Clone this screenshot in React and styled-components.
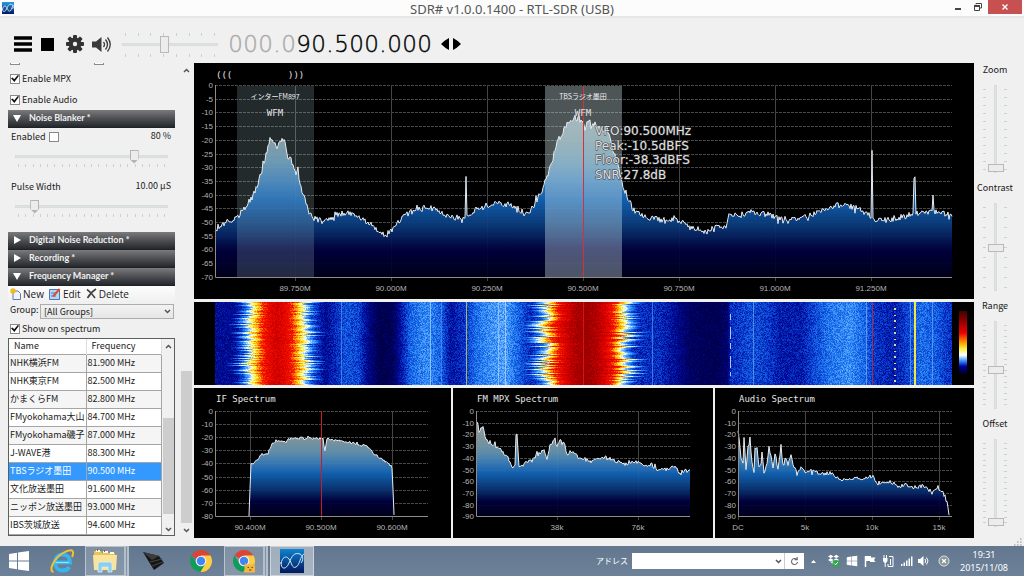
import { useMemo } from "react"
import { styled, createGlobalStyle, css } from "styled-components"
import { FaDropbox, FaWindows } from "react-icons/fa"

const GlobalStyle = createGlobalStyle`
  * { box-sizing: border-box; }

  body {
    margin: 0;
    background: #f0f0f0;
    color: #1a1a1a;
    font: 9px/12px "Noto Sans CJK JP", "Liberation Sans", sans-serif;
  }

  button, input, select {
    font: inherit;
    color: inherit;
    margin: 0;
    padding: 0;
    border: 0;
    background: none;
  }

  svg { display: block; }
`

/* ---------- window frame ---------- */

const Window = styled.div`
  display: flex;
  flex-direction: column;
`

const TitleBar = styled.header`
  display: grid;
  grid-template-columns: 80px 1fr 80px;
  height: 18px;
  background: #fcfcfc;
  border-bottom: 2px solid #e7e7e7;
`

const AppIcon = styled.div`
  padding: 2px;
`

const Title = styled.h1`
  margin: 0;
  color: #555;
  text-align: center;
  font: 400 13px/18px "Noto Sans", sans-serif;
`

const WindowButtons = styled.div`
  display: flex;
  justify-content: flex-end;
  padding-right: 2px;
`

const WindowButton = styled.button`
  display: grid;
  place-items: center;
  width: ${({ $close }) => ($close ? 34 : 20)}px;
  height: 14px;
  background: ${({ $close }) => ($close ? "#c75050" : "none")};
`

const TopBar = styled.div`
  display: flex;
  align-items: center;
  height: 45px;
  padding: 7px 12px 0;
`

const ToolButton = styled.button`
  display: grid;
  place-items: center;
  width: 27px;
  height: 20px;

  &:first-child {
    width: 22px;
  }
`

const Frequency = styled.output`
  display: flex;
  margin: 0 9px 0 10px;
  color: #000;
  font: 200 23px/26px "DejaVu Sans Light", "DejaVu Sans", sans-serif;
  -webkit-text-stroke: 0.4px;
`

const Digit = styled.span`
  width: ${({ $dot }) => ($dot ? 8 : 15)}px;
  text-align: center;
  color: ${({ $dim }) => ($dim ? "#aaa" : "#000")};
`

const Main = styled.main`
  display: grid;
  grid-template-columns: 194px 1fr 50px;
`

/* ---------- sliders ---------- */

const thumb = css`
  -webkit-appearance: none;
  border: 1px solid #b9b9b9;
  background: #ececec;
`

const Range = styled.input`
  -webkit-appearance: none;
  appearance: none;
  display: block;
  width: 100%;
  height: ${({ $pointed }) => ($pointed ? 14 : 17)}px;

  &::-webkit-slider-runnable-track {
    height: 3px;
    background: #e0e3e3;
    border: 1px solid #d9dcdc;
  }

  &::-webkit-slider-thumb {
    ${thumb}
    width: 9px;
    height: ${({ $pointed }) => ($pointed ? 14 : 17)}px;
    margin-top: ${({ $pointed }) => ($pointed ? -6 : -8)}px;
    ${({ $pointed }) => $pointed && css`
      border: 0;
      background: linear-gradient(#ececec, #ececec) 1px 1px / 7px 9px no-repeat, #b4b4b4;
      clip-path: polygon(0 0, 100% 0, 100% 68%, 50% 100%, 0 68%);
    `}
  }
`

const VerticalRange = styled.input`
  -webkit-appearance: none;
  appearance: none;
  writing-mode: vertical-lr;
  direction: rtl;
  width: 16px;
  height: 88px;

  &::-webkit-slider-runnable-track {
    width: 3px;
    background: #e0e3e3;
    border: 1px solid #d9dcdc;
  }

  &::-webkit-slider-thumb {
    ${thumb}
    width: 16px;
    height: 8px;
    margin-left: -7px;
  }
`

const TickLine = styled.div`
  display: flex;
  flex-direction: ${({ $vertical }) => ($vertical ? "column" : "row")};
  justify-content: space-between;
  ${({ $vertical }) => ($vertical ? "height: 81px;" : "margin: 1px 3px 0;")}

  span {
    width: ${({ $vertical }) => ($vertical ? 3 : 1)}px;
    height: ${({ $vertical }) => ($vertical ? 1 : 3)}px;
    background: #cfcfcf;
  }
`

const Ticks = ({ count, vertical }) => (
  <TickLine $vertical={vertical}>
    {Array.from({ length: count }, (_, i) => <span key={i} />)}
  </TickLine>
)

const VolumeSlider = styled.div`
  width: 96px;
  margin-left: 7px;
`

const SliderColumn = styled.aside`
  padding-right: 8px;
`

const SliderGroup = styled.label`
  display: flex;
  flex-direction: column;
  align-items: center;
  gap: 9px;
  height: 118px;
  line-height: 13px;
`

const SliderScale = styled.span`
  display: flex;
  align-items: center;
  gap: 1px;
`

/* ---------- side panel ---------- */

const Sidebar = styled.aside`
  display: grid;
  grid-template-columns: 1fr 12px;
  gap: 5px;
  padding: 0 2px 2px 8px;
`

const Panels = styled.div`
  display: flex;
  flex-direction: column;
`

const CutRow = styled.div`
  display: flex;
  align-items: flex-end;
  gap: 74px;
  height: 2px;
  padding-left: 2px;
  overflow: hidden;
`

const CheckRow = styled.label`
  display: flex;
  align-items: center;
  gap: 2px;
  height: ${({ $height }) => $height || 21}px;
  padding-left: 2px;
`

const Check = styled.input`
  -webkit-appearance: none;
  appearance: none;
  display: grid;
  place-content: center;
  flex: none;
  width: 10px;
  height: 10px;
  background: #fff;
  border: 1px solid #8a8a8a;

  &:checked::before {
    content: "";
    width: 8px;
    height: 7px;
    background: #111;
    clip-path: polygon(0 45%, 20% 35%, 40% 62%, 85% 0, 100% 12%, 42% 100%);
  }
`

const CheckGroup = styled.div`
  padding-top: 3px;
`

const PanelHeader = styled.button`
  display: flex;
  align-items: center;
  gap: 8px;
  height: 18px;
  padding: 0 5px 2px;
  color: #f0f0f0;
  text-align: left;
  font: 700 9px/12px Lato, sans-serif;
  background: linear-gradient(#7b7b7d 0%, #515357 45%, #24282c 100%);
  border-bottom: 1px solid #1e2225;
`

const PanelBody = styled.div`
  display: flex;
  flex-direction: column;
  gap: 11px;
  padding-bottom: 15px;
`

const Setting = styled.div`
  padding: 0 7px;
`

const SettingRow = styled.div`
  display: flex;
  justify-content: space-between;
  height: 17px;
  margin: 0 -3px 4px -4px;
  line-height: 15px;

  label {
    display: flex;
    align-items: center;
    gap: 3px;
  }
`

const ActionBar = styled.div`
  display: flex;
  gap: 5px;
  height: 15px;
  margin-bottom: 3px;
  padding-left: 2px;
  background: linear-gradient(#fdfdfd, #f1f1f1);
`

const Action = styled.button`
  display: flex;
  align-items: center;
  gap: 2px;
  font: 10px/14px "Open Sans", sans-serif;
`

const GroupRow = styled.div`
  display: grid;
  grid-template-columns: 30px 1fr;
  height: 15px;
  padding: 0 1px 0 2px;
  line-height: 11px;
`

const SelectBox = styled.span`
  display: grid;
  align-items: center;

  select, svg {
    grid-area: 1 / 1;
  }

  svg {
    justify-self: end;
    margin-right: 3px;
    pointer-events: none;
  }
`

const Select = styled.select`
  -webkit-appearance: none;
  appearance: none;
  height: 15px;
  padding: 0 3px;
  line-height: 13px;
  background: linear-gradient(#f2f2f2, #e6e6e6);
  border: 1px solid #adadad;
`

const TableBox = styled.div`
  display: grid;
  grid-template-columns: 1fr 12px;
  height: 198px;
  overflow: hidden;
  background: #fff;
  border: 1px solid #5c605c;
`

const Table = styled.table`
  width: 100%;
  border-collapse: collapse;
  table-layout: fixed;

  th {
    height: 15px;
    padding: 0 5px;
    font-weight: 400;
    text-align: left;
    border-right: 1px solid #ddd;
  }

  th:first-child {
    width: 77px;
  }
`

const TableRow = styled.tr`
  color: ${({ $selected }) => ($selected ? "#fff" : "inherit")};
  background: ${({ $selected }) => ($selected ? "#3399ff" : "#fff")};

  &:nth-child(odd) {
    background: ${({ $selected }) => ($selected ? "#3399ff" : "#f5f5f5")};
  }

  td {
    height: 18px;
    padding: 0 1px;
    white-space: nowrap;
    border: 1px solid #a5a5a5;
    border-left: 0;
  }
`

const ScrollBar = styled.div`
  display: grid;
  grid-template-rows: 14px ${({ $before }) => $before}fr ${({ $size }) => $size}fr ${({ $after }) => $after}fr 12px;
  justify-items: center;
  align-items: center;
  background: #f0f0f0;
`

const ScrollThumb = styled.div`
  grid-row: 3;
  width: 11px;
  height: 100%;
  background: #cdcdcd;
`

const ScrollEnd = styled.div`
  grid-row: 5;
`

/* ---------- spectra ---------- */

const Displays = styled.section`
  display: flex;
  flex-direction: column;
  gap: 3px;
`

const SmallCharts = styled.div`
  display: grid;
  grid-template-columns: 257fr 260fr 259fr;
  gap: 2px;
`

const Plot = styled.svg`
  width: 100%;
  height: auto;
  background: #000;

  text {
    fill: #b4b4b4;
    font: 8px "Liberation Sans", sans-serif;
  }

  .mono {
    fill: #e4e4e4;
    font: 9px "DejaVu Sans Mono", monospace;
  }

  .station {
    fill: #f0f0f0;
    font: 7px "Noto Sans CJK JP", sans-serif;
  }

  .peak {
    fill: #e0e0e0;
    stroke: #3a3a3a;
    stroke-width: 1px;
    paint-order: stroke;
    font: 12px "DejaVu Sans", sans-serif;
  }
`

const StatusStrip = styled.div`
  display: flex;
  justify-content: flex-end;
  height: 8px;
  padding-right: 2px;
`

/* ---------- taskbar ---------- */

const TaskBar = styled.footer`
  display: flex;
  align-items: center;
  height: 30px;
  color: #fff;
  background: linear-gradient(#63788f, #6d8199);
`

const TaskButton = styled.button`
  display: grid;
  place-items: center;
  width: ${({ $width }) => $width || 46}px;
  height: 30px;
  ${({ $open }) => $open && css`
    background: rgba(255, 255, 255, ${$open === "active" ? 0.4 : 0.18});
    border: 1px solid rgba(255, 255, 255, 0.45);
  `}
  ${({ $stacked }) => $stacked && css`
    border-right: 5px double rgba(255, 255, 255, 0.4);
  `}
`

const TaskButtons = styled.nav`
  display: flex;
  flex: 1;
  gap: 2px;
`

const Address = styled.label`
  display: flex;
  align-items: center;
  gap: 4px;
  margin-right: 6px;
  font-size: 8px;
`

const AddressField = styled.span`
  display: flex;
  align-items: center;
  width: 172px;
  height: 16px;
  background: #fff;

  input {
    flex: 1;
    min-width: 0;
    color: #111;
  }

  button {
    display: grid;
    place-items: center;
    width: 20px;
    height: 16px;
    border-left: 1px solid #ccc;
  }

  > svg {
    margin-right: 2px;
  }
`

const Tray = styled.div`
  display: flex;
  align-items: center;

  > svg {
    width: 18px;
  }
`

const Clock = styled.time`
  width: 60px;
  margin-right: 10px;
  text-align: center;
  font: 9px/13px "Noto Sans", sans-serif;
`

/* ---------- data ---------- */

const stations = [
  ["NHK横浜FM", "81.900 MHz"],
  ["NHK東京FM", "82.500 MHz"],
  ["かまくらFM", "82.800 MHz"],
  ["FMyokohama大山", "84.700 MHz"],
  ["FMyokohama磯子", "87.000 MHz"],
  ["J-WAVE港", "88.300 MHz"],
  ["TBSラジオ墨田", "90.500 MHz"],
  ["文化放送墨田", "91.600 MHz"],
  ["ニッポン放送墨田", "93.000 MHz"],
  ["IBS茨城放送", "94.600 MHz"],
]

const rfShape = [
  [21, 167], [26, 162], [36, 159], [43, 154], [51, 145], [59, 132], [66, 114], [71, 97], [74, 84], [76, 74],
  [79, 79], [83, 83], [87, 79], [90, 74], [93, 92], [98, 99], [102, 110], [104, 109], [107, 125], [111, 134],
  [114, 147], [120, 155], [129, 159], [134, 157], [143, 152], [148, 150], [156, 150], [169, 155], [176, 162],
  [184, 167], [191, 173], [198, 165], [209, 154], [223, 145], [236, 144], [246, 150], [259, 155], [271, 154],
  [272, 116], [273, 153], [276, 151], [286, 144], [296, 141], [313, 141], [323, 145], [333, 152], [339, 144],
  [346, 130], [353, 115], [359, 95], [363, 80], [368, 70], [374, 60], [384, 56], [389, 59], [391, 68], [393, 60],
  [399, 60], [406, 65], [414, 69], [418, 84], [423, 100], [428, 120], [434, 135], [439, 147], [449, 152],
  [458, 155], [473, 158], [486, 157], [496, 164], [506, 167], [516, 169], [523, 164], [533, 163], [535, 152],
  [546, 152], [559, 149], [576, 152], [591, 158], [609, 155], [619, 151], [633, 145], [643, 142], [663, 145],
  [676, 152], [677, 153], [678, 89], [679, 156], [693, 157], [716, 152], [719, 151], [720, 114], [721, 115],
  [722, 151], [729, 149], [738, 149], [739, 135], [740, 149], [746, 149], [758, 153],
]

const ifShape = [
  [55, 128], [56, 101], [57, 76], [63, 73], [66, 67], [74, 65], [78, 56], [83, 53], [93, 54], [94, 51],
  [106, 50], [129, 51], [131, 63], [133, 51], [146, 53], [163, 56], [173, 58], [179, 65], [193, 75],
  [198, 80], [199, 101], [200, 128],
]

const mpxShape = [
  [24, 33], [26, 43], [30, 38], [33, 53], [39, 55], [47, 61], [54, 68], [59, 80], [62, 76], [63, 45], [64, 46],
  [66, 80], [72, 75], [79, 73], [85, 66], [91, 63], [94, 70], [98, 56], [102, 51], [104, 60], [107, 51],
  [111, 55], [114, 65], [118, 63], [124, 68], [139, 74], [150, 69], [157, 71], [172, 76], [179, 73], [187, 76],
  [199, 77], [207, 83], [214, 81], [220, 78], [226, 84], [237, 82],
]

const audioShape = [
  [23, 43], [25, 58], [26, 71], [28, 75], [29, 51], [31, 81], [33, 61], [35, 51], [37, 75], [39, 86], [40, 61],
  [42, 60], [44, 78], [46, 75], [47, 64], [49, 85], [52, 75], [54, 58], [58, 81], [60, 65], [63, 81], [66, 58],
  [68, 78], [71, 71], [73, 78], [76, 65], [78, 75], [82, 86], [86, 78], [90, 85], [98, 83], [107, 86],
  [117, 85], [125, 91], [133, 91], [148, 90], [158, 88], [163, 96], [172, 93], [178, 95], [185, 100],
  [190, 95], [195, 100], [208, 98], [217, 105], [222, 99], [228, 105], [232, 115], [234, 128],
]

const randomFrom = (seed) => () => {
  seed = (seed * 1664525 + 1013904223) % 4294967296
  return seed / 4294967296
}

const lerpAt = (points, x) => {
  if (x <= points[0][0]) return points[0][1]
  for (let i = 1; i < points.length; i++) {
    const [x1, y1] = points[i]
    if (x <= x1) {
      const [x0, y0] = points[i - 1]
      return y0 + ((y1 - y0) * (x - x0)) / (x1 - x0)
    }
  }
  return points[points.length - 1][1]
}

const traceOf = (shape, noise, bottom) => {
  const random = randomFrom(shape.length * 77)
  const end = shape[shape.length - 1][0]
  const points = []
  for (let x = shape[0][0]; x <= end; x++) {
    const jump = random() > 0.94 ? 2 : 1
    const y = lerpAt(shape, x) + (random() - 0.5) * 2 * noise * jump
    points.push(`${x},${Math.min(bottom, y).toFixed(1)}`)
  }
  return points.join(" ")
}

const Chart = ({ id, width, height, plot, dbStep, dbPx, dbCount, marks, shape, noise, labelY, under, children }) => {
  const [left, top, right, bottom] = plot
  const trace = useMemo(() => traceOf(shape, noise, bottom), [shape, noise, bottom])
  const first = shape[0][0]
  const last = shape[shape.length - 1][0]
  return (
    <Plot viewBox={`0 0 ${width} ${height}`}>
      <defs>
        <linearGradient id={id} gradientUnits="userSpaceOnUse" x1="0" y1={top} x2="0" y2={bottom}>
          <stop offset="0" stopColor="#a8aeae" />
          <stop offset=".28" stopColor="#839ea8" />
          <stop offset=".4" stopColor="#6496b6" />
          <stop offset=".5" stopColor="#3a80bf" />
          <stop offset=".6" stopColor="#1264b8" />
          <stop offset=".74" stopColor="#0a3878" />
          <stop offset=".86" stopColor="#00003f" />
          <stop offset="1" stopColor="#00001c" />
        </linearGradient>
      </defs>
      {Array.from({ length: dbCount }, (_, i) => {
        const y = Math.round(top + i * dbPx)
        return (
          <g key={i}>
            {i < dbCount - 1 && <path d={`M${left} ${y + 0.5}H${right}`} stroke="#484848" strokeDasharray="3 1" />}
            <text x={left - 2} y={y + 3} textAnchor="end">{i ? -i * dbStep : 0}</text>
          </g>
        )
      })}
      {marks.map(([x, label]) => (
        <g key={label}>
          <path d={`M${x + 0.5} ${top}V${bottom + 4}`} stroke="#444" />
          <text x={x} y={labelY} textAnchor="middle">{label}</text>
        </g>
      ))}
      <polygon points={`${first},${bottom} ${trace} ${last},${bottom}`} fill={`url(#${id})`} fillOpacity=".93" />
      {under}
      <polyline points={trace} fill="none" stroke="#e6eaee" />
      <path d={`M${left + 0.5} ${top}V${bottom + 0.5}H${right}`} fill="none" stroke="#8c8c8c" />
      {children}
    </Plot>
  )
}

const peakInfo = ["VFO:90.500MHz", "Peak:-10.5dBFS", "Floor:-38.3dBFS", "SNR:27.8dB"]

const RfSpectrum = () => (
  <Chart
    id="rf" width={780} height={236} plot={[21, 22, 758, 214]}
    dbStep={5} dbPx={13.7} dbCount={15} shape={rfShape} noise={3} labelY={228}
    marks={[
      [101, "89.750M"], [197, "90.000M"], [293, "90.250M"], [389, "90.500M"],
      [485, "90.750M"], [581, "91.000M"], [677, "91.250M"],
    ]}
    under={
      <>
        <rect x="43" y="23" width="77" height="191" fill="#b0d2dc" fillOpacity=".2" />
        <rect x="351" y="23" width="77" height="191" fill="#dcf3f6" fillOpacity=".35" />
      </>
    }
  >
    <rect x="389" y="23" width="1" height="191" fill="#d8303a" />
    <text className="mono" x="22" y="15">(((</text>
    <text className="mono" x="94" y="15">)))</text>
    <text className="station" x="81" y="36" textAnchor="middle">インターFM897</text>
    <text className="mono" x="81" y="53" textAnchor="middle">WFM</text>
    <text className="station" x="389" y="36" textAnchor="middle">TBSラジオ墨田</text>
    <text className="mono" x="389" y="53" textAnchor="middle">WFM</text>
    {peakInfo.map((line, i) => (
      <text key={line} className="peak" x="401" y={72 + Math.round(i * 14.6)}>{line}</text>
    ))}
  </Chart>
)

/* ---------- waterfall ---------- */

const palette = [
  [0, 0, 0, 30], [0.15, 0, 0, 90], [0.27, 0, 10, 150], [0.36, 8, 60, 205], [0.45, 30, 120, 240],
  [0.54, 100, 175, 255], [0.62, 240, 250, 250], [0.7, 255, 245, 60], [0.78, 255, 150, 0],
  [0.85, 245, 20, 0], [0.93, 215, 0, 0], [1, 150, 0, 0],
]

const LEVELS = 48

const colorAt = (t) => {
  const mix = (c) => Math.round(lerpAt(palette.map((p) => [p[0], p[c]]), t))
  return `rgb(${mix(1)},${mix(2)},${mix(3)})`
}

const coldBand = [
  [21, 0.26], [41, 0.26], [51, 0.36], [110, 0.4], [118, 0.36], [131, 0.26], [151, 0.39], [164, 0.37], [174, 0.24],
  [186, 0.12], [198, 0.14], [206, 0.28], [216, 0.42], [231, 0.48], [246, 0.42], [256, 0.29], [268, 0.33],
  [281, 0.43], [296, 0.49], [311, 0.51], [326, 0.4], [336, 0.32], [350, 0.4], [430, 0.38], [441, 0.33],
  [466, 0.33], [481, 0.26], [496, 0.16], [521, 0.13], [533, 0.18], [536, 0.33], [556, 0.38], [571, 0.36],
  [586, 0.3], [606, 0.3], [621, 0.38], [636, 0.45], [656, 0.48], [671, 0.42], [681, 0.34], [701, 0.3],
  [716, 0.38], [726, 0.43], [741, 0.41], [758, 0.33],
]

// distance from the carrier, in px, to level
const hotNear = [[0, 0.93], [8, 0.9], [15, 0.84], [21, 0.75], [27, 0.64], [33, 0.5], [40, 0.3], [52, 0]]
const hotTuned = [[0, 1], [12, 0.97], [22, 0.91], [29, 0.84], [35, 0.74], [40, 0.62], [46, 0.5], [54, 0.3], [70, 0]]

const WATERFALL_ROWS = 83

const buildWaterfall = () => {
  const random = randomFrom(42)
  const paths = Array.from({ length: LEVELS }, () => "")
  for (let y = 0; y < WATERFALL_ROWS; y++) {
    const swing = Math.sin(y * 0.17) * 0.05
    const spread = [0, 1, 2, 3].map(() => 1 + swing + (random() - 0.5) * 0.34)
    let runStart = 21
    let runLevel = -1
    for (let x = 21; x <= 758; x++) {
      let level = -1
      if (x < 758) {
        let t = lerpAt(coldBand, x) + (random() - 0.5) * 0.12
        const near = x - 83
        const tuned = x - 391
        if (Math.abs(near) < 60) {
          t = Math.max(t, lerpAt(hotNear, Math.abs(near) * spread[near < 0 ? 0 : 1]) + (random() - 0.5) * 0.07)
        }
        if (Math.abs(tuned) < 80) {
          t = Math.max(t, lerpAt(hotTuned, Math.abs(tuned) * spread[tuned < 0 ? 2 : 3]) + (random() - 0.5) * 0.06)
        }
        level = Math.max(0, Math.min(LEVELS - 1, Math.round(t * (LEVELS - 1))))
      }
      if (level !== runLevel) {
        if (runLevel >= 0) paths[runLevel] += `M${runStart} ${y}h${x - runStart}v1h${runStart - x}z`
        runStart = x
        runLevel = level
      }
    }
  }
  return paths
}

const carriers = [
  [147, 1, "#6fb4ff", 0.5], [236, 1, "#9ccfff", 0.8], [247, 1, "#7fb8ff", 0.4], [272, 1, "#c8c850", 0.85],
  [304, 1, "#b0d8ff", 0.6], [311, 1, "#c0e0ff", 0.6], [389, 1, "#ff2020", 0.6], [458, 1, "#5aa8ff", 0.6],
  [559, 1, "#8cc4ff", 0.5], [672, 1, "#9ccfff", 0.5], [678, 1, "#b82840", 0.9], [716, 1, "#6fb4ff", 0.6],
  [720, 2, "#f4e840", 1], [738, 1, "#8cc4ff", 0.5],
]

const Waterfall = () => {
  const paths = useMemo(buildWaterfall, [])
  return (
    <Plot viewBox="0 0 780 83" shapeRendering="crispEdges">
      <defs>
        <linearGradient id="scale" x1="0" y1="0" x2="0" y2="1">
          <stop offset="0" stopColor="#400000" />
          <stop offset=".35" stopColor="#f00000" />
          <stop offset=".5" stopColor="#ff9a00" />
          <stop offset=".6" stopColor="#fff040" />
          <stop offset=".7" stopColor="#fff" />
          <stop offset=".79" stopColor="#3a94ff" />
          <stop offset=".88" stopColor="#0000a0" />
          <stop offset="1" stopColor="#000020" />
        </linearGradient>
      </defs>
      {paths.map((d, i) => <path key={i} d={d} fill={colorAt(i / (LEVELS - 1))} />)}
      {carriers.map(([x, width, color, opacity]) => (
        <rect key={x} x={x} y="0" width={width} height="83" fill={color} fillOpacity={opacity} />
      ))}
      <path d="M536.5 12v62" stroke="#a8c8ff" strokeDasharray="6 7 12 4" />
      <path d="M701 5.500v77" stroke="#d8d890" strokeWidth="2" strokeDasharray="2 5 1 4" />
      <rect x="765" y="9" width="8" height="63" fill="url(#scale)" />
    </Plot>
  )
}

/* ---------- icons ---------- */

const Chevron = ({ up }) => (
  <svg width="7" height="5" viewBox="0 0 7 5">
    <path d={up ? "M1 4L3.500 1.500L6 4" : "M1 1L3.500 3.500L6 1"} fill="none" stroke="#555" strokeWidth="1.500" />
  </svg>
)

const Wave = ({ size, tall }) => (
  <svg width={size} height={size} viewBox="0 0 24 24">
    <defs>
      <linearGradient id={`wave${size}`} x1="0" y1="0" x2="0" y2="1">
        <stop offset="0" stopColor={tall ? "#0e84d0" : "#2a9be0"} />
        <stop offset="1" stopColor="#04165c" />
      </linearGradient>
    </defs>
    <rect width="24" height="24" fill={`url(#wave${size})`} />
    <path
      d="M1 13C1 21 6 21 9 14S14 3 20 5C24 7 23 12 21 14M1 15C2 8 6 6 9 10S12 20 16 18S20 7 24 5"
      fill="none" stroke="#cfe6f8" strokeWidth={tall ? 1 : 1.8}
    />
  </svg>
)

const Gear = () => (
  <svg width="18" height="18" viewBox="0 0 18 18">
    <g fill="#333">
      {[0, 45, 90, 135].map((angle) => (
        <rect key={angle} x="7" y="0" width="4" height="18" rx="1" transform={`rotate(${angle} 9 9)`} />
      ))}
      <circle cx="9" cy="9" r="6.500" />
    </g>
    <circle cx="9" cy="9" r="2.200" fill="#f0f0f0" />
  </svg>
)

const Speaker = () => (
  <svg width="19" height="17" viewBox="0 0 19 17">
    <path d="M0 5.500h4L9.500 1v15L4 11.500H0z" fill="#3a3a3a" />
    <path d="M11.500 6q2 2.500 0 5M13.500 3.500q4 5 0 10M15.500 1.500q5.500 7 0 14" fill="none" stroke="#3a3a3a" strokeWidth="1.300" />
  </svg>
)

const Chrome = ({ badge }) => (
  <svg width="24" height="24" viewBox="0 0 24 24">
    <path d="M12 12L2.500 6.500A11 11 0 0 1 21.500 6.500L12 6.800z" fill="#db4437" />
    <path d="M2.500 6.500A11 11 0 0 0 11.500 23L16.600 14.600L12 12L7.400 14.600z" fill="#0f9d58" />
    <path d="M21.500 6.500A11 11 0 0 1 11.500 23L16.600 14.600L17.200 12L12 6.500z" fill="#ffcd40" />
    <circle cx="12" cy="12" r="5.300" fill="#f4f4f4" />
    <circle cx="12" cy="12" r="4.200" fill="#4285f4" />
    {badge && (
      <g>
        <path d="M13 14l1.500 1.500h6L22 14l1 4v5.500h-10.500V18z" fill="#f0b840" />
        <path d="M15.500 18.500h1.500M19.500 18.500h1.500M17 21h2.500" stroke="#7a4a10" />
      </g>
    )}
  </svg>
)

const InternetExplorer = () => (
  <svg width="26" height="26" viewBox="0 0 26 26">
    <path d="M6.500 14.500H21C21 9.500 18 6.500 13.500 6.500S6 10 6 14.500S9 22.500 13.500 22.500C16.500 22.500 19 21.500 20.300 19" fill="none" stroke="#36b5ee" strokeWidth="4" />
    <path d="M6.500 14.500H20" stroke="#9ee0fb" strokeWidth="1" />
    <path d="M4.500 24C-1 23 5 10 14 5C20 1.500 25 1 24 6C23.800 7 23.500 8 23 9" fill="none" stroke="#f2c230" strokeWidth="2" />
  </svg>
)

const Explorer = () => (
  <svg width="26" height="24" viewBox="0 0 26 24">
    <path d="M2 2h7l1 2h13v16H2z" fill="#e9c35a" />
    <path d="M4 1h4v2H4zM11 2h5v2h-5zM18 3h4v2h-4z" fill="#f8f8f4" />
    <path d="M5 1h1M12 2h1" stroke="#d33" strokeWidth="2" />
    <path d="M8 1h2" stroke="#3a5" strokeWidth="2" />
    <path d="M1 6h24l-1 15H2z" fill="#f8e49a" />
    <path d="M6 15q0-2 2-2h10q2 0 2 2v8h-4v-5h-6v5H6z" fill="#8fcdec" stroke="#d8f0fa" strokeWidth=".8" />
  </svg>
)

const sliders = [
  ["Zoom", 11, 0], ["Contrast", 9, 49], ["Range", 15, 43], ["Offset", 15, 0],
]

const frequencyText = "000.090.500.000"

export default function App() {
  return (
    <Window>
      <GlobalStyle />
      <TitleBar>
        <AppIcon><Wave size={12} /></AppIcon>
        <Title>SDR# v1.0.0.1400 - RTL-SDR (USB)</Title>
        <WindowButtons>
          <WindowButton aria-label="Minimize">
            <svg width="6" height="6" viewBox="0 0 6 6"><path d="M0 5h6" stroke="#444" strokeWidth="2" /></svg>
          </WindowButton>
          <WindowButton aria-label="Restore">
            <svg width="8" height="8" viewBox="0 0 8 8">
              <path d="M2 1.500V.5h5.500V5H6" fill="none" stroke="#444" />
              <path d="M.5 3h5v4.500h-5z" fill="none" stroke="#444" />
              <path d="M0 3h6" stroke="#444" strokeWidth="2" />
            </svg>
          </WindowButton>
          <WindowButton $close aria-label="Close">
            <svg width="6" height="6" viewBox="0 0 6 6"><path d="M.5.5l5 5M5.500.5l-5 5" stroke="#fff" strokeWidth="1.300" /></svg>
          </WindowButton>
        </WindowButtons>
      </TitleBar>

      <TopBar>
        <ToolButton aria-label="Menu">
          <svg width="18" height="16" viewBox="0 0 18 16"><path d="M0 2h18M0 8h18M0 14h18" stroke="#000" strokeWidth="3.600" /></svg>
        </ToolButton>
        <ToolButton aria-label="Stop">
          <svg width="13" height="13" viewBox="0 0 13 13"><rect width="13" height="13" /></svg>
        </ToolButton>
        <ToolButton aria-label="Settings"><Gear /></ToolButton>
        <ToolButton aria-label="Mute"><Speaker /></ToolButton>
        <VolumeSlider>
          <Ticks count={8} />
          <Range type="range" aria-label="Volume" defaultValue="43" />
          <Ticks count={8} />
        </VolumeSlider>
        <Frequency>
          {[...frequencyText].map((char, i) => (
            <Digit key={i} $dot={char === "."} $dim={i < 5}>{char}</Digit>
          ))}
        </Frequency>
        <svg width="20" height="12" viewBox="0 0 20 12">
          <path d="M8 0v12Q4 10 0 6Q4 2 8 0zM12 0v12Q16 10 20 6Q16 2 12 0z" />
        </svg>
      </TopBar>

      <Main>
        <Sidebar>
          <Panels>
            <CutRow>
              <Check type="checkbox" aria-label="Lock carrier" />
              <Check type="checkbox" aria-label="Anti-fading" />
            </CutRow>
            <CheckGroup>
              <CheckRow><Check type="checkbox" defaultChecked />Enable MPX</CheckRow>
              <CheckRow><Check type="checkbox" defaultChecked />Enable Audio</CheckRow>
            </CheckGroup>

            <PanelHeader>
              <svg width="8" height="8" viewBox="0 0 8 8"><path d="M0 1h8L4 8z" fill="#fff" /></svg>
              Noise Blanker *
            </PanelHeader>
            <PanelBody>
              <Setting>
                <SettingRow>
                  <label>Enabled<Check type="checkbox" /></label>
                  <span>80 %</span>
                </SettingRow>
                <Range type="range" $pointed aria-label="Threshold" defaultValue="80" />
                <Ticks count={21} />
              </Setting>
              <Setting>
                <SettingRow>
                  <label htmlFor="pulse">Pulse Width</label>
                  <span>10.00 µS</span>
                </SettingRow>
                <Range type="range" id="pulse" $pointed defaultValue="10" />
                <Ticks count={21} />
              </Setting>
            </PanelBody>

            <PanelHeader>
              <svg width="8" height="8" viewBox="0 0 8 8"><path d="M1 0v8l7-4z" fill="#fff" /></svg>
              Digital Noise Reduction *
            </PanelHeader>
            <PanelHeader>
              <svg width="8" height="8" viewBox="0 0 8 8"><path d="M1 0v8l7-4z" fill="#fff" /></svg>
              Recording *
            </PanelHeader>
            <PanelHeader>
              <svg width="8" height="8" viewBox="0 0 8 8"><path d="M0 1h8L4 8z" fill="#fff" /></svg>
              Frequency Manager *
            </PanelHeader>

            <ActionBar>
              <Action>
                <svg width="11" height="12" viewBox="0 0 11 12">
                  <path d="M3 3h5l2.500 2.500V11.500H3z" fill="#eef4fc" stroke="#5a7ab0" />
                  <circle cx="3" cy="3" r="2.700" fill="#f5b81e" />
                </svg>
                New
              </Action>
              <Action>
                <svg width="12" height="12" viewBox="0 0 12 12">
                  <path d="M.5 1.500h10v10H.5z" fill="#b8d4f4" stroke="#4a78c0" />
                  <path d="M2 5h4M2 8h5" stroke="#4a78c0" />
                  <path d="M4 8.500L10.500 1" stroke="#d8502c" strokeWidth="2" />
                </svg>
                Edit
              </Action>
              <Action>
                <svg width="11" height="11" viewBox="0 0 11 11">
                  <path d="M1 1.500Q5 4 9 10M10 1Q5 4 1.500 10" fill="none" stroke="#444" strokeWidth="1.600" />
                </svg>
                Delete
              </Action>
            </ActionBar>
            <GroupRow>
              <label htmlFor="group">Group:</label>
              <SelectBox>
                <Select id="group"><option>[All Groups]</option></Select>
                <Chevron />
              </SelectBox>
            </GroupRow>
            <CheckRow $height={19}><Check type="checkbox" defaultChecked />Show on spectrum</CheckRow>

            <TableBox>
              <Table>
                <thead><tr><th>Name</th><th>Frequency</th></tr></thead>
                <tbody>
                  {stations.map(([name, frequency]) => (
                    <TableRow key={name} $selected={frequency === "90.500 MHz"}>
                      <td>{name}</td>
                      <td>{frequency}</td>
                    </TableRow>
                  ))}
                </tbody>
              </Table>
              <ScrollBar $before={65} $size={96} $after={9}>
                <Chevron up />
                <ScrollThumb />
                <ScrollEnd><Chevron /></ScrollEnd>
              </ScrollBar>
            </TableBox>
          </Panels>
          <ScrollBar $before={295} $size={152} $after={1}>
            <Chevron up />
            <ScrollThumb />
            <ScrollEnd><Chevron /></ScrollEnd>
          </ScrollBar>
        </Sidebar>

        <Displays>
          <RfSpectrum />
          <Waterfall />
          <SmallCharts>
            <Chart
              id="if" width={257} height={150} plot={[21, 23, 234, 128]}
              dbStep={10} dbPx={13.1} dbCount={9} shape={ifShape} noise={1.2} labelY={142}
              marks={[[56, "90.400M"], [127, "90.500M"], [198, "90.600M"]]}
            >
              <rect x="127" y="23" width="1" height="105" fill="#c81c26" />
              <text className="mono" x="22" y="14">IF Spectrum</text>
            </Chart>
            <Chart
              id="mpx" width={260} height={150} plot={[23, 23, 237, 128]}
              dbStep={10} dbPx={11.7} dbCount={10} shape={mpxShape} noise={2} labelY={142}
              marks={[[104, "38k"], [185, "76k"]]}
            >
              <text className="mono" x="24" y="14">FM MPX Spectrum</text>
            </Chart>
            <Chart
              id="audio" width={259} height={150} plot={[23, 23, 237, 128]}
              dbStep={10} dbPx={11.7} dbCount={10} shape={audioShape} noise={1.8} labelY={142}
              marks={[[23, "DC"], [90, "5k"], [157, "10k"], [224, "15k"]]}
            >
              <text className="mono" x="24" y="14">Audio Spectrum</text>
            </Chart>
          </SmallCharts>
        </Displays>

        <SliderColumn>
          {sliders.map(([name, count, value]) => (
            <SliderGroup key={name}>
              {name}
              <SliderScale>
                <Ticks vertical count={count} />
                <VerticalRange type="range" defaultValue={value} />
                <Ticks vertical count={count} />
              </SliderScale>
            </SliderGroup>
          ))}
        </SliderColumn>
      </Main>

      <StatusStrip>
        <svg width="8" height="8" viewBox="0 0 8 8">
          <path d="M6 1h1.500M3 4h1.500M6 4h1.500M0 7h1.500M3 7h1.500M6 7h1.500" stroke="#b0b0b0" strokeWidth="1.500" />
        </svg>
      </StatusStrip>

      <TaskBar>
        <TaskButtons>
          <TaskButton $width={38} aria-label="Start">
            <svg width="20" height="20" viewBox="0 0 20 20">
              <path d="M0 3l8-1.200V9.500H0zM9 1.600L20 0v9.500H9zM0 10.500h8v7.700L0 17zM9 10.500h11V20L9 18.400z" fill="#fff" />
            </svg>
          </TaskButton>
          <TaskButton $width={43} aria-label="Internet Explorer"><InternetExplorer /></TaskButton>
          <TaskButton $width={44} $open $stacked aria-label="File Explorer"><Explorer /></TaskButton>
          <TaskButton aria-label="Receiver tools">
            <svg width="22" height="20" viewBox="0 0 22 20">
              <path d="M0 1L16 5L21 12L11 19L6 11z" fill="#161616" />
              <path d="M0 1L16 5L9 9z" fill="#3c3c3c" />
              <path d="M7 11L19 8M9 15L20 11" stroke="#444" />
            </svg>
          </TaskButton>
          <TaskButton $width={43} aria-label="Chrome"><Chrome /></TaskButton>
          <TaskButton $width={44} $open $stacked aria-label="Chrome window"><Chrome badge /></TaskButton>
          <TaskButton $width={44} $open="active" aria-label="SDR#"><Wave size={24} tall /></TaskButton>
        </TaskButtons>
        <Address>
          アドレス
          <AddressField>
            <input type="text" />
            <Chevron />
            <button aria-label="Refresh">
              <svg width="9" height="9" viewBox="0 0 9 9">
                <path d="M6.800 2.500A3 3 0 1 0 7.500 5M4.500 2.800H7.200V0" fill="none" stroke="#666" strokeWidth="1.100" />
              </svg>
            </button>
          </AddressField>
        </Address>
        <Tray>
          <svg width="18" height="5" viewBox="0 0 18 5"><path d="M1 4L3.500 1L6 4z" fill="#fff" /></svg>
          <svg width="18" height="14" viewBox="0 0 18 14">
            <FaDropbox size={11} fill="#fff" />
            <circle cx="8" cy="9.500" r="3.500" fill="#2fa84a" />
            <path d="M6.300 9.500l1.300 1.300 2.200-2.600" fill="none" stroke="#fff" />
          </svg>
          <svg width="18" height="12" viewBox="0 0 18 12"><FaWindows size={12} fill="#fff" /></svg>
          <svg width="18" height="12" viewBox="0 0 18 12">
            <path d="M1.500 1v11" stroke="#fff" strokeWidth="1.500" />
            <path d="M2 1h5v1.500h4.500L10 5l1.500 2H6V6H2z" fill="#fff" />
          </svg>
          <svg width="18" height="12" viewBox="0 0 18 12">
            <path d="M2 0v3M4.500 0v3M3.200 7v5" stroke="#fff" />
            <path d="M1 3h4.500v3L4 8H2.500L1 6z" fill="#fff" />
            <path d="M7 1.500h4v10H6V9" fill="none" stroke="#fff" />
            <path d="M8.500 4v6" stroke="#fff" />
          </svg>
          <svg width="18" height="12" viewBox="0 0 18 12">
            <path d="M1 11V9h1.500v2zM3.500 11V7.500H5V11zM6 11V5.500h1.500V11zM8.500 11V3.500H10V11zM11 11V1.500h1.500V11z" fill="#fff" />
          </svg>
          <svg width="18" height="12" viewBox="0 0 18 12">
            <path d="M0 4h2L5.500 1v10L2 8H0z" fill="#fff" />
            <path d="M7 4q1.500 2 0 4M8.500 2.500q3 3.500 0 7" fill="none" stroke="#fff" />
          </svg>
          <svg width="18" height="12" viewBox="0 0 18 12">
            <circle cx="8" cy="6" r="5" fill="#88909a" stroke="#e0e4e8" />
            <path d="M6 4l4 4M10 4L6 8" stroke="#fff" strokeWidth="1.400" />
          </svg>
        </Tray>
        <Clock>19:31<br />2015/11/08</Clock>
      </TaskBar>
    </Window>
  )
}
